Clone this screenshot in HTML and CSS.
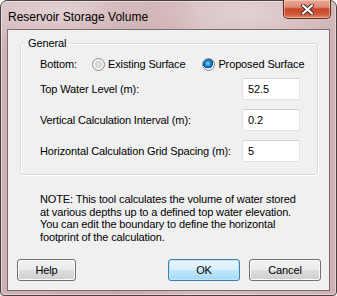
FILE: index.html
```html
<!DOCTYPE html>
<html>
<head>
<meta charset="utf-8">
<link rel="stylesheet" href="styles.css">
</head>
<body>
<div class="window">
  <div class="titlebar">
    <span class="title">Reservoir Storage Volume</span>
    <div class="close">
      <svg width="13" height="11" viewBox="0 0 13 11">
        <path d="M2 1.5 L11 9.5 M11 1.5 L2 9.5" stroke="#3b2a2a" stroke-width="4" stroke-linecap="round"/>
        <path d="M2 1.5 L11 9.5 M11 1.5 L2 9.5" stroke="#ffffff" stroke-width="2.2" stroke-linecap="round"/>
      </svg>
    </div>
  </div>
  <div class="client">
    <fieldset class="group">
      <legend>General</legend>
      <div class="bottom-row">
        <span class="lbl">Bottom:</span>
        <span class="radio"><span class="circle"></span>Existing Surface</span>
        <span class="radio"><span class="circle checked"></span>Proposed Surface</span>
      </div>
      <div class="field"><span>Top Water Level (m):</span><span class="input">52.5</span></div>
      <div class="field"><span>Vertical Calculation Interval (m):</span><span class="input">0.2</span></div>
      <div class="field"><span>Horizontal Calculation Grid Spacing (m):</span><span class="input">5</span></div>
    </fieldset>
    <p class="note">NOTE: This tool calculates the volume of water stored<br>at various depths up to a defined top water elevation.<br>You can edit the boundary to define the horizontal<br>footprint of the calculation.</p>
    <div class="buttons">
      <span class="btn help">Help</span>
      <span class="btn default">OK</span>
      <span class="btn">Cancel</span>
    </div>
  </div>
</div>
</body>
</html>
```
FILE: styles.css
```css
* { box-sizing: border-box; }
html, body { margin: 0; padding: 0; background: #ffffff; }
body { font-family: "Liberation Sans", Arial, sans-serif; font-size: 11px; color: #000; white-space: nowrap; letter-spacing: -0.13px; }

.window {
  width: 337px;
  height: 296px;
  border: 1px solid #4a4040;
  border-radius: 7px 7px 4px 4px;
  padding: 0 6px 4px 6px;
  background:
    radial-gradient(ellipse 120px 40px at 60px 10px, rgba(255,255,255,0.45), rgba(255,255,255,0)),
    radial-gradient(ellipse 100px 40px at 250px 12px, rgba(255,255,255,0.35), rgba(255,255,255,0)),
    linear-gradient(to right, #cfb3b5 0%, #c9a6aa 35%, #d5bcbd 60%, #cfb2b4 100%);
  display: flex;
  flex-direction: column;
  box-shadow: inset 0 0 0 1px rgba(255,255,255,0.45);
}

.titlebar {
  height: 28px;
  display: flex;
  align-items: flex-start;
  justify-content: space-between;
}
.title {
  font-family: "Liberation Sans", Arial, sans-serif;
  font-size: 12px;
  letter-spacing: 0;
  margin: 9px 0 0 1px;
  color: #000;
}
.close {
  width: 48px;
  height: 19px;
  margin-top: -1px;
  margin-right: -1px;
  border: 1px solid #5a2e28;
  border-top: none;
  border-radius: 0 0 5px 5px;
  background: linear-gradient(to bottom, #e9a795 0%, #de8a72 40%, #c8452b 50%, #d15a3b 80%, #e48a64 100%);
  box-shadow: inset 0 0 0 1px rgba(255,220,210,0.5);
  display: flex;
  align-items: center;
  justify-content: center;
}

.client {
  flex: 1;
  border: 1px solid #7d6d6e;
  background: #f0f0f0;
  padding: 7px 8px 0 9px;
  display: flex;
  flex-direction: column;
}

.group {
  margin: 0 3px 0 3px;
  border: 1px solid #d5dfe5;
  border-radius: 3px;
  padding: 0 17px 12px 19px;
  box-shadow: inset 1px 1px 0 #ffffff, 1px 1px 0 #ffffff;
  min-width: 0;
}
.group legend {
  padding: 0 2px;
  margin-left: -14px;
  line-height: 13px;
}

.bottom-row {
  display: flex;
  align-items: center;
  height: 16px;
  margin-top: 6px;
  margin-bottom: 6px;
}
.bottom-row > * { flex: none; }
.bottom-row .lbl { width: 52px; }
.radio {
  display: flex;
  align-items: center;
  gap: 3px;
  margin-right: 17px;
}
.circle {
  width: 13px;
  height: 13px;
  flex: none;
  border-radius: 50%;
  border: 1px solid #8e8f8f;
  background: radial-gradient(circle at 50% 50%, #e6e6e6 0%, #cfcfcf 45%, #f4f4f4 100%);
  box-shadow: inset 0 0 0 2px #f5f5f5;
}
.circle.checked {
  background: radial-gradient(circle at 45% 40%, #8fd4ff 0%, #1e8ad6 30%, #0b4f8c 55%, #f4f4f4 58%, #f4f4f4 100%);
  box-shadow: none;
}

.field {
  display: flex;
  align-items: center;
  justify-content: space-between;
  height: 22px;
  margin-bottom: 9px;
}
.field:last-child { margin-bottom: 0; }
.input {
  width: 58px;
  height: 22px;
  background: #fff;
  border: 1px solid #dfe2e6;
  border-top-color: #cdd0d4;
  border-radius: 2px;
  padding: 0 0 0 5px;
  display: flex;
  align-items: center;
}

.note {
  margin: 18px 0 0 23px;
  line-height: 12.5px;
}

.buttons {
  display: flex;
  margin-top: auto;
  margin-bottom: 9px;
  gap: 9px;
}
.btn {
  width: 72px;
  height: 22px;
  border: 1px solid #707070;
  border-radius: 3px;
  background: linear-gradient(to bottom, #f2f2f2 0%, #ebebeb 48%, #dddddd 52%, #cfcfcf 100%);
  box-shadow: inset 0 0 0 1px #fcfcfc;
  display: flex;
  align-items: center;
  justify-content: center;
}
.btn.help { width: 59px; margin-right: auto; }
.btn.default {
  border-color: #3c7fb1;
  background: linear-gradient(to bottom, #eaf6fd 0%, #d9f0fc 48%, #bee6fd 52%, #a7d9f5 100%);
  box-shadow: inset 0 0 0 1px #c4e5f6;
}
```
